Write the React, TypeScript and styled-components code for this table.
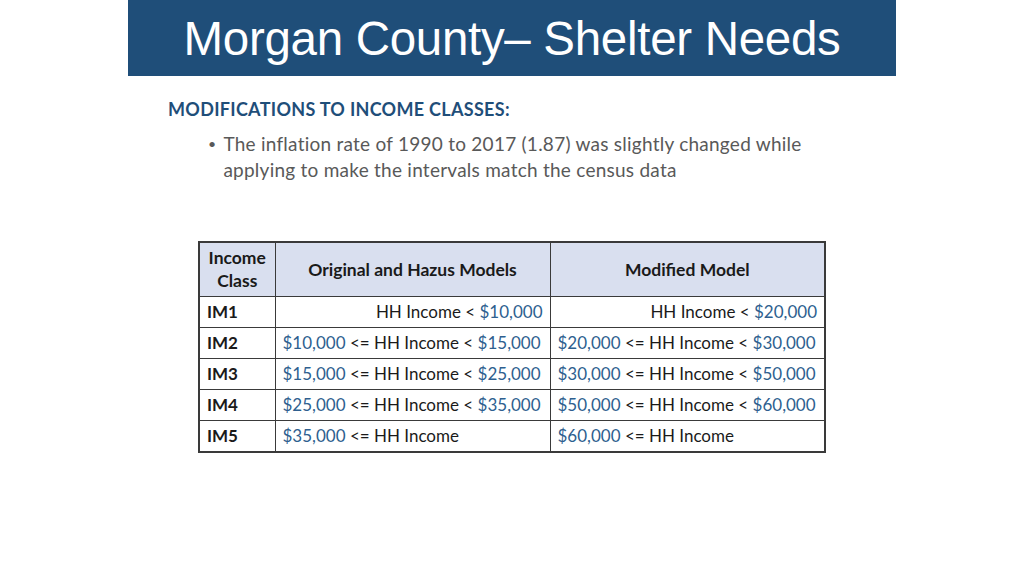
import React from "react";
import styled, { createGlobalStyle } from "styled-components";

const Global = createGlobalStyle`
  html, body { margin: 0; padding: 0; background: #ffffff; }
  body { width: 1024px; height: 576px; overflow: hidden; font-family: "Lato", "Open Sans", sans-serif; }
`;

const Slide = styled.div`
  width: 1024px;
  height: 576px;
  display: flex;
  flex-direction: column;
  align-items: center;
`;

const TitleBar = styled.header`
  width: 768px;
  height: 76px;
  background: #1f4e79;
  display: flex;
  align-items: center;
  justify-content: center;
`;

const Title = styled.h1`
  margin: 0;
  font-family: "Liberation Sans", Arial, sans-serif;
  font-weight: 400;
  font-size: 47.5px;
  color: #ffffff;
  letter-spacing: -0.3px;
`;

const Body = styled.section`
  width: 1024px;
  box-sizing: border-box;
  padding: 22px 0 0 168px;
  display: flex;
  flex-direction: column;
`;

const Heading = styled.h2`
  margin: 0;
  font-family: "Lato", sans-serif;
  font-weight: 700;
  font-size: 18px;
  line-height: 22px;
  color: #1f4e79;
  letter-spacing: 0.3px;
`;

const Bullet = styled.div`
  margin: 11px 0 0 40px;
  display: flex;
  gap: 7px;
  font-family: "Lato", sans-serif;
  font-size: 19px;
  line-height: 26px;
  letter-spacing: 0.25px;
  color: #595959;
  width: 640px;
`;

const Dot = styled.span`
  font-size: 14px;
`;

const TableWrap = styled.div`
  margin: 58px 0 0 30px;
`;

const Table = styled.table`
  border-collapse: collapse;
  font-family: "Lato", sans-serif;
  font-size: 17px;
  color: #1a1a1a;
  border: 2px solid #3a3a3a;
`;

const Th = styled.th<{ $w: number }>`
  width: ${(p) => p.$w}px;
  height: 54px;
  box-sizing: border-box;
  background: #d9dfef;
  border: 1px solid #3a3a3a;
  font-weight: 700;
  font-size: 17.5px;
  line-height: 23px;
  padding: 0 6px;
  text-align: center;
`;

const Td = styled.td<{ $right?: boolean; $bold?: boolean }>`
  height: 31px;
  box-sizing: border-box;
  border: 1px solid #3a3a3a;
  padding: 0 7px;
  text-align: ${(p) => (p.$right ? "right" : "left")};
  font-weight: ${(p) => (p.$bold ? 700 : 400)};
  white-space: nowrap;
`;

const LastTd = styled(Td)`
  height: 32px;
`;

const Money = styled.span`
  color: #2e5f8f;
`;

type Cell = { lo?: string; hi?: string };

const rows: { cls: string; orig: Cell; mod: Cell }[] = [
  { cls: "IM1", orig: { hi: "$10,000" }, mod: { hi: "$20,000" } },
  { cls: "IM2", orig: { lo: "$10,000", hi: "$15,000" }, mod: { lo: "$20,000", hi: "$30,000" } },
  { cls: "IM3", orig: { lo: "$15,000", hi: "$25,000" }, mod: { lo: "$30,000", hi: "$50,000" } },
  { cls: "IM4", orig: { lo: "$25,000", hi: "$35,000" }, mod: { lo: "$50,000", hi: "$60,000" } },
  { cls: "IM5", orig: { lo: "$35,000" }, mod: { lo: "$60,000" } },
];

const Range = ({ c }: { c: Cell }) => (
  <>
    {c.lo && (
      <>
        <Money>{c.lo}</Money> &lt;={" "}
      </>
    )}
    HH Income
    {c.hi && (
      <>
        {" "}&lt; <Money>{c.hi}</Money>
      </>
    )}
  </>
);

export default function App() {
  return (
    <>
      <Global />
      <Slide>
        <TitleBar>
          <Title>Morgan County– Shelter Needs</Title>
        </TitleBar>
        <Body>
          <Heading>MODIFICATIONS TO INCOME CLASSES:</Heading>
          <Bullet>
            <Dot>•</Dot>
            <span>
              The inflation rate of 1990 to 2017 (1.87) was slightly changed while applying to make the intervals match the census data
            </span>
          </Bullet>
          <TableWrap>
            <Table>
              <thead>
                <tr>
                  <Th $w={76}>
                    Income
                    <br />
                    Class
                  </Th>
                  <Th $w={275}>Original and Hazus Models</Th>
                  <Th $w={275}>Modified Model</Th>
                </tr>
              </thead>
              <tbody>
                {rows.map((r, i) => {
                  const C = i === rows.length - 1 ? LastTd : Td;
                  return (
                    <tr key={r.cls}>
                      <C $bold>{r.cls}</C>
                      <C $right={!r.orig.lo}>
                        <Range c={r.orig} />
                      </C>
                      <C $right={!r.mod.lo}>
                        <Range c={r.mod} />
                      </C>
                    </tr>
                  );
                })}
              </tbody>
            </Table>
          </TableWrap>
        </Body>
      </Slide>
    </>
  );
}
